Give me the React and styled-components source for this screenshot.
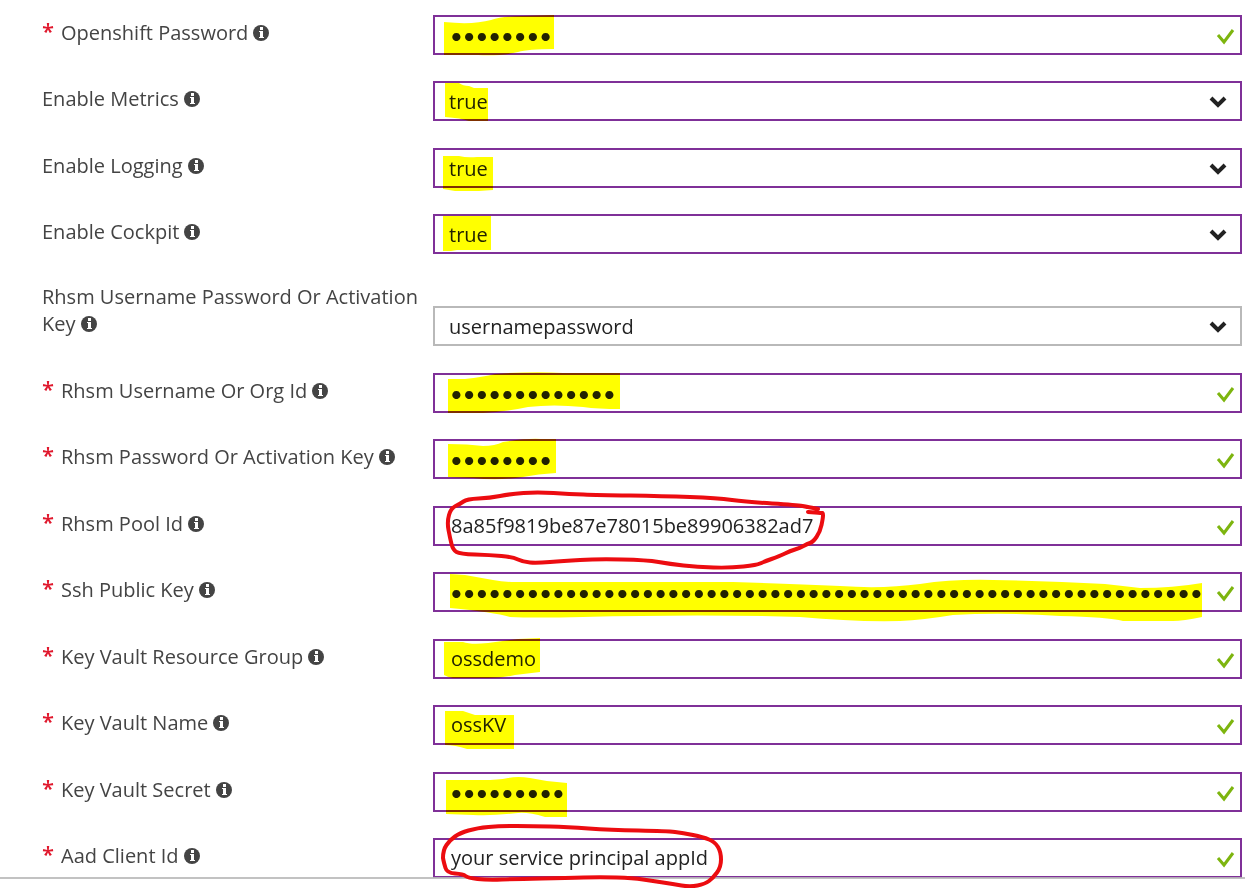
import React from "react";
import styled, { createGlobalStyle } from "styled-components";

const GlobalStyle = createGlobalStyle`
  *, *::before, *::after { box-sizing: border-box; }
  body {
    margin: 0;
    background: #fff;
    font-family: "Open Sans", "Noto Sans", sans-serif;
  }
`;

const Page = styled.main`
  min-height: 100vh;
  padding-top: 15px;
  overflow: hidden;
  background: #fff;
`;

const Form = styled.form`
  display: flex;
  flex-direction: column;
  gap: 27px;
  padding: 0 3px 0 42px;
`;

const Group = styled.fieldset`
  display: flex;
  flex-direction: column;
  min-width: 0;
  margin: 0;
  padding: 0;
  border: 0;
`;

const Row = styled.div`
  display: grid;
  grid-template-columns: 391px minmax(0, 1fr);
  align-items: end;

  &:nth-child(odd):not(:last-child) { margin-bottom: 26px; }
  &:nth-child(even):not(:last-child) { margin-bottom: 27px; }
`;

const LabelCell = styled.div`
  display: flex;
  padding: 2px 8px 9px 0;
  color: #444;
  font-size: 20px;
  line-height: 27px;
`;

const Star = styled.span`
  flex: none;
  width: 19px;
  color: #e0182d;
  font-size: 22px;
  font-weight: 600;
  line-height: 22px;
`;

const InfoButton = styled.button`
  display: inline-block;
  width: 16px;
  height: 16px;
  margin: 0 0 0 5px;
  padding: 0;
  border: 0;
  background: none;
  line-height: 0;
  vertical-align: -1px;
`;

const Field = styled.div`
  position: relative;
  height: 40px;
`;

const TextInput = styled.input`
  display: block;
  width: 100%;
  height: 40px;
  margin: 0;
  padding: ${(p) => (p.type === "password" ? "0 36px 0 15px" : "0 36px 2px 16px")};
  border: 2px solid #7f3098;
  border-radius: 0;
  outline: 0;
  background: #fff;
  color: #222;
  font-family: ${(p) => (p.type === "password" ? "Lato, sans-serif" : "inherit")};
  font-size: ${(p) => (p.type === "password" ? "22px" : "20px")};
`;

const Select = styled.select`
  display: block;
  width: 100%;
  height: 40px;
  margin: 0;
  padding: 0 48px 0 14px;
  border: 2px solid ${(p) => (p.$untouched ? "#b9b9b9" : "#7f3098")};
  border-radius: 0;
  outline: 0;
  appearance: none;
  background: #fff;
  color: #222;
  font-family: inherit;
  font-size: 20px;
`;

const Mark = styled.svg`
  position: absolute;
  top: 0;
  right: ${(p) => (p.$select ? "14px" : "7px")};
  height: 40px;
  fill: none;
  stroke: ${(p) => (p.$select ? "#222" : "#7db50f")};
  stroke-width: ${(p) => (p.$select ? 4 : 3)};
  pointer-events: none;
`;

const Ink = styled.svg`
  position: absolute;
  z-index: 2;
  top: 0;
  left: 0;
  width: 100%;
  height: 100%;
  overflow: visible;
  pointer-events: none;
`;

const Highlighter = styled(Ink)`
  fill: #ff0;
  mix-blend-mode: multiply;
`;

const Pen = styled(Ink)`
  fill: none;
  stroke: #ec0c10;
  stroke-width: 4;
  stroke-linecap: round;
  stroke-linejoin: round;
`;

const Divider = styled.hr`
  position: relative;
  z-index: 1;
  height: 2px;
  margin: -1px 0 0;
  border: 0;
  background: #bababae0;
`;

// Joins pen points with quadratic curves through their midpoints.
function strokePath(points) {
  let d = `M${points[0][0]} ${points[0][1]}`;
  for (let i = 1; i < points.length - 1; i++) {
    const [x, y] = points[i];
    const [nx, ny] = points[i + 1];
    d += ` Q${x} ${y} ${(x + nx) / 2} ${(y + ny) / 2}`;
  }
  const end = points[points.length - 1];
  return `${d} L${end[0]} ${end[1]}`;
}

const poolStroke = [
  [385, 3], [375, 1], [364, -1], [314, -4], [284, -8], [230, -10], [164, -11], [137, -12],
  [104, -14], [77, -12], [57, -8], [34, -7], [27, -2], [18, 2], [14, 16], [17, 32],
  [20, 44], [27, 48], [57, 49], [80, 51], [90, 56], [104, 57], [130, 55], [164, 53],
  [214, 54], [237, 58], [264, 61], [297, 62], [324, 59], [330, 56], [347, 50],
  [357, 45], [367, 42], [374, 38], [380, 36], [387, 26], [390, 12], [390, 7], [389, 7], [375, 6],
];

const clientStroke = [
  [10, 20], [10, 12], [17, 2], [27, -5], [44, -10], [67, -12], [100, -12], [134, -11],
  [177, -8], [234, -7], [250, -5], [270, -1], [282, 4], [288, 14], [288, 29],
  [280, 40], [272, 46], [257, 49], [240, 46], [220, 43], [200, 40], [167, 39],
  [134, 40], [84, 41], [54, 42], [35, 40], [30, 36], [14, 35], [11, 25], [10, 20],
];

const basics = [
  { id: "openshift-password", label: "Openshift Password", type: "password", value: "x".repeat(8),
    highlight: "M11 7Q40 10 58 5Q70 1 90 1L121 0V34Q95 34 85 37Q70 41 45 40H11Z" },
  { id: "metrics", label: "Enable Metrics", type: "select", value: "true",
    highlight: "M12 2H26Q30 5 36 5L41 7H55V40H36Q28 37 12 36Z" },
  { id: "logging", label: "Enable Logging", type: "select", value: "true",
    highlight: "M10 8H26Q34 10 44 9H60V42L46 43H22Q16 42 10 41Z" },
  { id: "cockpit", label: "Enable Cockpit", type: "select", value: "true",
    highlight: "M10 2H58V36H24L18 37H10Z" },
  { id: "rhsm-mode", label: "Rhsm Username Password Or Activation Key", type: "select",
    value: "usernamepassword", untouched: true },
];

const credentials = [
  { id: "rhsm-user", label: "Rhsm Username Or Org Id", type: "password", value: "x".repeat(13),
    highlight: "M15 6H32Q50 4 62 1Q100 -2 130 0H187V36Q165 36 150 34Q120 31 95 34Q70 39 50 40H15Z" },
  { id: "rhsm-password", label: "Rhsm Password Or Activation Key", type: "password", value: "x".repeat(8),
    highlight: "M15 5Q35 5 50 7Q62 7 70 3Q95 -1 108 0H123V34Q105 35 90 38Q65 42 40 39L15 38Z" },
  { id: "pool-id", label: "Rhsm Pool Id", type: "text", value: "8a85f9819be87e78015be89906382ad7",
    pen: poolStroke },
  { id: "ssh-key", label: "Ssh Public Key", type: "password", value: "x".repeat(59),
    highlight: "M17 2L32 3L60 8Q70 10 82 10H300Q360 12 407 14Q450 17 487 12Q520 7 560 8Q620 9 672 12Q690 14 707 16Q740 16 769 11V45Q750 49 740 49H690Q675 45 627 44Q570 40 520 43Q490 48 467 49Q420 50 367 45Q270 42 150 45Q100 46 77 45Q60 40 17 36Z" },
  { id: "vault-group", label: "Key Vault Resource Group", type: "text", value: "ossdemo",
    highlight: "M11 3H30Q38 6 55 4L85 0L107 -1V33L82 36Q70 39 55 39H20Q14 38 11 36Z" },
  { id: "vault-name", label: "Key Vault Name", type: "text", value: "ossKV",
    highlight: "M12 6H30L42 10H81V44H34Q22 40 12 40Z" },
  { id: "vault-secret", label: "Key Vault Secret", type: "password", value: "x".repeat(9),
    highlight: "M13 8H50Q65 8 75 6Q85 4 97 6Q115 10 134 11V45H112Q95 40 85 41Q60 44 40 43L13 42Z" },
  { id: "client-id", label: "Aad Client Id", type: "text", value: "your service principal appId",
    pen: clientStroke },
];

function InfoIcon() {
  return (
    <svg width="16" height="16" viewBox="0 0 16 16" aria-hidden="true">
      <circle cx="8" cy="8" r="8" fill="#444" />
      <path fill="#fff" d="M7 2h3v3H7zM6 6h4v6h1v1H6v-1h1V7H6z" />
    </svg>
  );
}

function FormRow({ id, label, type, value, untouched, highlight, pen }) {
  const isSelect = type === "select";
  return (
    <Row>
      <LabelCell>
        {!isSelect && <Star aria-hidden="true">*</Star>}
        <div>
          <label htmlFor={id}>{label}</label>
          <InfoButton type="button" aria-label={`About ${label}`}>
            <InfoIcon />
          </InfoButton>
        </div>
      </LabelCell>
      <Field>
        {isSelect ? (
          <Select id={id} defaultValue={value} $untouched={untouched}>
            <option value={value}>{value}</option>
          </Select>
        ) : (
          <TextInput id={id} type={type} defaultValue={value} autoComplete="off" spellCheck={false} required />
        )}
        {isSelect ? (
          <Mark $select width="20" viewBox="0 0 20 40" aria-hidden="true">
            <path d="M3 17l7 7 7-7" />
          </Mark>
        ) : (
          <Mark width="19" viewBox="0 0 19 40" aria-hidden="true">
            <path d="M2 20l6 7 9-12" />
          </Mark>
        )}
        {highlight && (
          <Highlighter aria-hidden="true">
            <path d={highlight} />
          </Highlighter>
        )}
        {pen && (
          <Pen aria-hidden="true">
            <path d={strokePath(pen)} />
          </Pen>
        )}
      </Field>
    </Row>
  );
}

export default function App() {
  return (
    <>
      <GlobalStyle />
      <Page>
        <Form>
          <Group>
            {basics.map((row) => (
              <FormRow key={row.id} {...row} />
            ))}
          </Group>
          <Group>
            {credentials.map((row) => (
              <FormRow key={row.id} {...row} />
            ))}
          </Group>
        </Form>
        <Divider />
      </Page>
    </>
  );
}
